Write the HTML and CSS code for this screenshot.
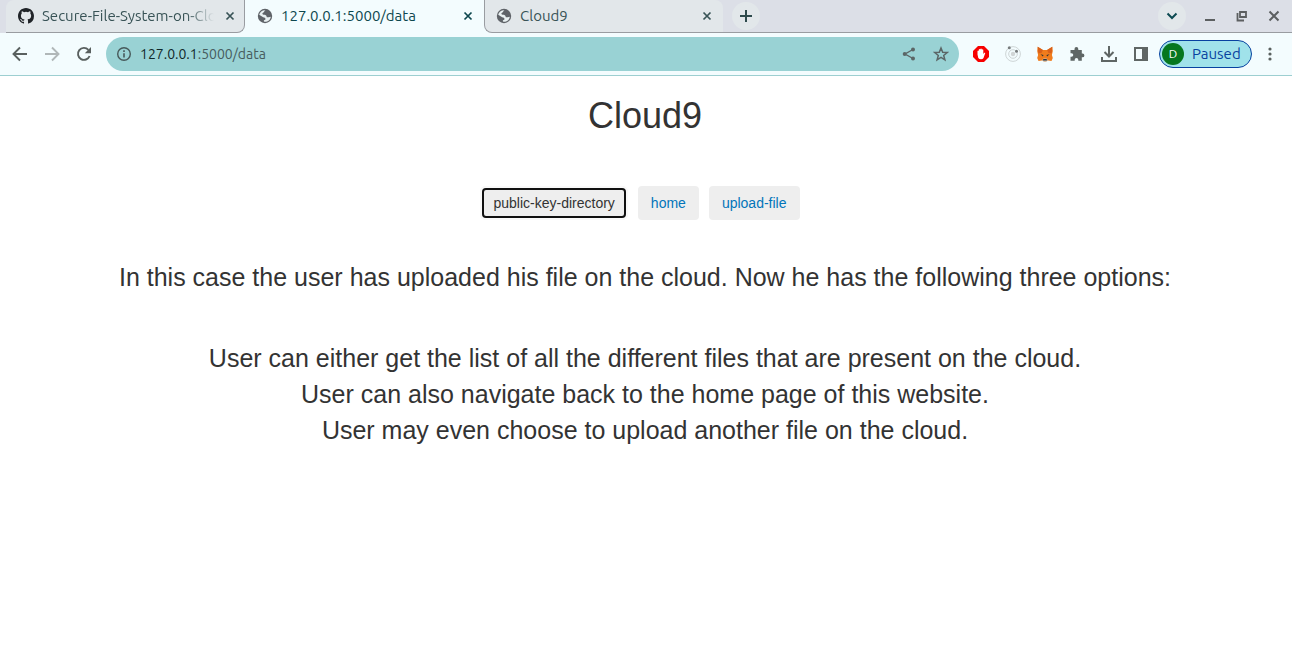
FILE: index.html
```html
<!DOCTYPE html>
<html lang="en">
<head>
<meta charset="utf-8">
<title>Cloud9</title>
<link rel="stylesheet" href="styles.css">
</head>
<body>
<svg class="defs" aria-hidden="true">
  <symbol id="close" viewBox="0 0 16 16"><path d="M4.500 4.500l7 7M11.500 4.500l-7 7" fill="none" stroke="currentColor" stroke-width="1.700"/></symbol>
  <symbol id="globe" viewBox="0 0 16 16"><circle cx="8" cy="8" r="7.200" fill="#5f6368"/><path d="M8.500 2.300C7 2.800 7.500 4.200 6 4.800c-1.200.6-.4 2 .7 2 1.800 0 2.800.6 2.900 1.700.1 1 1.200.8 2.200.7L13.800 8.800C13.500 11.800 11 13.800 8 13.800c-.8 0-1.200-.2-1.200-1 0-1 1.700-.7 1.700-1.900 0-1.600-2.200-1.100-3.500-2.300L2.200 6.800C2.800 4 5.500 2 8.500 2.300z" fill="#e8f0f1"/><path d="M9 2.300l2.800 1.400-.8 1.700-2.500.4-1-1z" fill="#5f6368"/></symbol>
</svg>
<header class="browser">
  <div class="tabstrip">
    <div class="tab tab-before">
      <svg class="icon16" viewBox="0 0 16 16"><path fill="#202428" d="M8 0C3.580 0 0 3.580 0 8c0 3.540 2.290 6.530 5.470 7.590.4.070.55-.17.55-.38v-1.490c-2.010.37-2.530-.49-2.690-.94-.09-.23-.48-.94-.82-1.130-.28-.15-.68-.52-.01-.53.630-.01 1.080.58 1.230.82.72 1.210 1.870.87 2.330.66.070-.52.28-.87.51-1.070-1.780-.2-3.640-.89-3.640-3.950 0-.87.31-1.590.82-2.150-.08-.2-.36-1.020.08-2.120 0 0 .67-.21 2.200.82a7.600 7.600 0 014 0c1.530-1.040 2.200-.82 2.200-.82.44 1.100.16 1.920.08 2.120.51.560.82 1.270.82 2.150 0 3.070-1.870 3.750-3.650 3.950.29.25.54.73.54 1.480v2.200c0 .21.15.46.55.38A8 8 0 0016 8c0-4.420-3.580-8-8-8z"/></svg>
      <span class="tab-title fade">Secure-File-System-on-Clo</span>
      <button class="tab-close" aria-label="Close tab"><svg class="icon16"><use href="#close"/></svg></button>
    </div>
    <div class="tab tab-active">
      <svg class="icon16"><use href="#globe"/></svg>
      <span class="tab-title">127.0.0.1:5000/data</span>
      <button class="tab-close" aria-label="Close tab"><svg class="icon16"><use href="#close"/></svg></button>
    </div>
    <div class="tab tab-after">
      <svg class="icon16"><use href="#globe"/></svg>
      <span class="tab-title">Cloud9</span>
      <button class="tab-close" aria-label="Close tab"><svg class="icon16"><use href="#close"/></svg></button>
    </div>
    <div class="strip-rest">
      <button class="round" aria-label="New tab"><svg class="icon16" viewBox="0 0 16 16"><path d="M8 2v12M2 8h12" stroke="#2e4a4c" stroke-width="2"/></svg></button>
      <button class="round push" aria-label="Search tabs"><svg class="icon16" viewBox="0 0 16 16"><path d="M3.500 5.500L8 10l4.500-4.500" fill="none" stroke="#0d4a52" stroke-width="2"/></svg></button>
      <div class="window-buttons">
        <button aria-label="Minimize"><svg class="icon16" viewBox="0 0 16 16"><path d="M3 12h10" stroke="#5c5f61" stroke-width="2"/></svg></button>
        <button aria-label="Restore"><svg class="icon16" viewBox="0 0 16 16"><path d="M6 4h6v5H6zM3.500 5v7.500H10" fill="none" stroke="#5c5f61" stroke-width="1.800"/></svg></button>
        <button aria-label="Close"><svg class="icon16" viewBox="0 0 16 16"><path d="M3.500 3.500l9 9M12.500 3.500l-9 9" stroke="#5c5f61" stroke-width="2"/></svg></button>
      </div>
    </div>
  </div>
  <div class="toolbar">
    <div class="nav">
      <button aria-label="Back"><svg class="icon16" viewBox="0 0 16 16"><path d="M15 8H2M8 1.500L1.500 8 8 14.500" fill="none" stroke="#59605f" stroke-width="1.900"/></svg></button>
      <button aria-label="Forward"><svg class="icon16" viewBox="0 0 16 16"><path d="M1 8h13M8 1.500L14.500 8 8 14.500" fill="none" stroke="#b0b7b8" stroke-width="1.900"/></svg></button>
      <button aria-label="Reload"><svg class="icon16" viewBox="0 0 16 16"><path d="M13.600 10A6 6 0 1 1 12.400 3.800" fill="none" stroke="#59605f" stroke-width="1.900"/><path d="M15 1v6.200H8.800z" fill="#59605f"/></svg></button>
    </div>
    <div class="address">
      <svg class="icon16" viewBox="0 0 16 16"><circle cx="8" cy="8" r="6.300" fill="none" stroke="#47595a" stroke-width="1.400"/><path d="M8 7.200v4.300M8 4.300v1.600" stroke="#47595a" stroke-width="1.600"/></svg>
      <div class="url"><span class="host">127.0.0.1</span>:5000/data</div>
      <button aria-label="Share"><svg class="icon16" viewBox="0 0 16 16"><path d="M12 3.500L4 8l8 4.500" fill="none" stroke="#5b6666" stroke-width="1.400"/><g fill="#5b6666"><circle cx="12" cy="3.500" r="2"/><circle cx="3.700" cy="8" r="2"/><circle cx="12" cy="12.500" r="2"/></g></svg></button>
      <button aria-label="Bookmark"><svg class="icon16" viewBox="0 0 16 16"><path d="M8 2l1.700 4.200 4.500.3-3.500 2.900 1.200 4.400L8 11.400l-3.900 2.400 1.200-4.400L1.800 6.500l4.500-.3z" fill="none" stroke="#5b6666" stroke-width="1.500"/></svg></button>
    </div>
    <div class="extensions">
      <button aria-label="Ad blocker"><svg class="icon16" viewBox="0 0 16 16"><path d="M5 0h6l5 5v6l-5 5H5l-5-5V5z" fill="#f70000"/><path d="M4.500 8.500V5q.7-.8 1.300 0V3.500q.8-1 1.500 0V3q.8-1 1.500 0v.8q.8-1 1.500 0V8l1-1.200q.9-.4 1 .3L10.500 12Q9.800 13.300 8 13.300T5.300 12z" fill="#fff"/></svg></button>
      <button aria-label="Orbit"><svg class="icon16" viewBox="0 0 16 16"><g fill="none" stroke="#ced5d6"><circle cx="8" cy="8" r="7.400"/><circle cx="8" cy="8" r="4.300"/></g><circle cx="8" cy="8" r="2.200" fill="#d0d5d6"/><circle cx="4.300" cy="1.800" r="1.500" fill="#777c7d"/><circle cx="11.500" cy="5.300" r="1.500" fill="#777c7d"/></svg></button>
      <button aria-label="Wallet"><svg class="icon16" viewBox="0 0 16 16"><path d="M.7.800L6 4h4l5.300-3.200.5 4.200-.9 4 .9 3-1.300 3-3.500-.5-2 1H7l-2-1-3.500.5L.2 12l.9-3-.9-4z" fill="#f07c1c"/><path d="M.7.800L6 4 4.500 7 1.300 7.300zM15.300.800L10 4l1.500 3 3.200.3z" fill="#d9601a"/><path d="M5 14.500l1.500-2h3l1.500 2-2 1H7z" fill="#c9c2bb"/><path d="M6.300 13h3.400l.3 1.500H6zM3.500 8.300l3 .7-.6 1.500zM12.500 8.300l-3 .7.600 1.500z" fill="#2f3437"/></svg></button>
      <button aria-label="Extensions"><svg class="icon16" viewBox="0 0 16 16"><path d="M1.500 4h4V3a1.900 1.900 0 0 1 3.800 0v1h3.500v3.500h.7a1.900 1.900 0 0 1 0 3.800h-.7v3.500H9.300v-1a1.800 1.800 0 0 0-3.600 0v1H1.500v-4h1a1.800 1.800 0 0 0 0-3.600h-1z" fill="#5f6665"/></svg></button>
      <button aria-label="Downloads"><svg class="icon16" viewBox="0 0 16 16"><path d="M8 0v10M3.500 6L8 10.500 12.500 6M1 11v4h14v-4" fill="none" stroke="#5f6665" stroke-width="2"/></svg></button>
      <button aria-label="Side panel"><svg class="icon16" viewBox="0 0 16 16"><path d="M1 1h14v14H1zM3 3v10h6V3z" fill="#5f6665" fill-rule="evenodd"/></svg></button>
    </div>
    <button class="profile"><span class="avatar">D</span>Paused</button>
    <button class="menu" aria-label="Menu"><svg class="icon16" viewBox="0 0 16 16"><g fill="#59605f"><circle cx="8" cy="3" r="1.600"/><circle cx="8" cy="8" r="1.600"/><circle cx="8" cy="13" r="1.600"/></g></svg></button>
  </div>
</header>
<main class="page">
  <h1>Cloud9</h1>
  <nav class="actions">
    <button class="btn btn-focused">public-key-directory</button>
    <a class="btn" href="#home">home</a>
    <a class="btn" href="#upload">upload-file</a>
  </nav>
  <p class="intro">In this case the user has uploaded his file on the cloud. Now he has the following three options:</p>
  <p class="options">User can either get the list of all the different files that are present on the cloud.<br>User can also navigate back to the home page of this website.<br>User may even choose to upload another file on the cloud.</p>
</main>
</body>
</html>
```

FILE: styles.css
```css
* { box-sizing: border-box; }
body {
  margin: 0;
  background: #fff;
  color: #333;
  font: 14px/20px "Liberation Sans", Arial, sans-serif;
}
button {
  margin: 0;
  padding: 0;
  border: 0;
  background: none;
  color: inherit;
  font: inherit;
}
.defs { display: none; }
.icon16 { display: block; width: 16px; height: 16px; flex: none; }

/* Browser chrome */
.browser { font-family: Ubuntu, "Noto Sans", sans-serif; }
.tabstrip {
  display: flex;
  height: 33px;
  padding-left: 6px;
  background: linear-gradient(#f3fcfe, #f3fcfe) 230px 0 / 270px 100% no-repeat #dcdfe7;
}
.tab {
  display: flex;
  align-items: center;
  flex: 0 1 239px;
  min-width: 0;
  padding: 0 8px 1px 12px;
  color: #385356;
  font-size: 15px;
}
.tab-before,
.tab-after { background: #e2e7ea; border-bottom: 1px solid #999ca1; padding-bottom: 0; }
.tab-before { border-right: 1px solid #999ca1; border-radius: 8px 0 8px 0; padding-right: 6px; }
.tab-after { border-left: 1px solid #999ca1; border-radius: 0 8px 0 8px; padding-left: 11px; }
.tab-active { background: #f3fcfe; color: #0d474e; border-radius: 8px 8px 0 0; }
.tab-title { flex: 1; margin-left: 8px; overflow: hidden; white-space: nowrap; }
.fade { -webkit-mask-image: linear-gradient(90deg, #000 84%, transparent); mask-image: linear-gradient(90deg, #000 84%, transparent); }
.tab-close { margin-left: 8px; }
.strip-rest {
  display: flex;
  align-items: center;
  flex: 1;
  padding: 0 10px 0 9px;
  background: #dcdfe7;
  border-bottom: 1px solid #999ca1;
}
.round {
  display: grid;
  place-items: center;
  width: 28px;
  height: 28px;
  border-radius: 50%;
  background: #e2e7ea;
}
.push { margin-left: auto; }
.window-buttons { display: flex; gap: 16px; margin-left: 16px; }
.toolbar {
  display: flex;
  align-items: center;
  height: 43px;
  padding: 0 14px 0 12px;
  background: #f3fcfe;
  border-bottom: 1px solid #9dcfd1;
}
.nav { display: flex; gap: 16px; }
.address {
  display: flex;
  align-items: center;
  flex: 1;
  gap: 16px;
  height: 34px;
  margin-left: 14px;
  padding: 0 10px;
  border-radius: 17px;
  background: #99d2d4;
}
.url { flex: 1; margin-left: -8px; color: #475c5e; }
.host { color: #10282a; }
.extensions { display: flex; gap: 16px; margin: 0 10px 0 14px; }
.profile {
  display: flex;
  align-items: center;
  gap: 8px;
  width: 93px;
  height: 28px;
  padding: 0 2px;
  border: 1px solid #0842a0;
  border-radius: 14px;
  background: #a0e2ea;
  color: #0842a0;
  font-size: 15px;
}
.avatar {
  width: 22px;
  height: 22px;
  border-radius: 50%;
  background: #067720;
  color: #fff;
  font-size: 12px;
  line-height: 22px;
}
.menu { margin-left: 10px; }

/* Page */
.page { text-align: center; padding-right: 2px; }
h1 { margin: 20px 0 50px; font-size: 36px; font-weight: 400; line-height: 40px; }
.actions { display: flex; justify-content: center; gap: 10px; padding-right: 10px; }
.btn {
  height: 34px;
  padding: 7px 13px;
  border-radius: 4px;
  background: #eee;
  color: #0275ba;
  text-decoration: none;
}
.btn-focused {
  border-radius: 6px;
  color: #333;
  box-shadow: inset 0 0 0 2px #f9f9f9;
  outline: 2px solid #101010;
  outline-offset: -4px;
}
.intro,
.options { margin: 0; font-size: 25px; line-height: 36px; }
.intro { margin-top: 39px; }
.options { margin-top: 45px; }
```
